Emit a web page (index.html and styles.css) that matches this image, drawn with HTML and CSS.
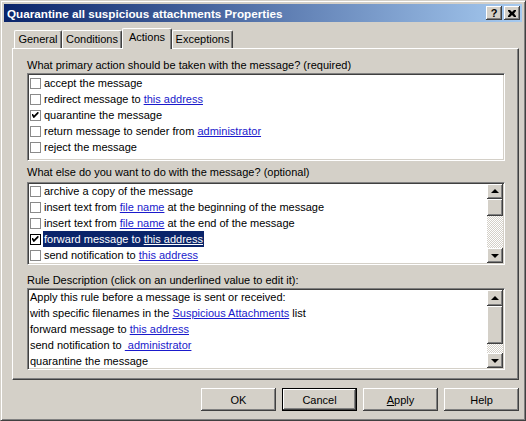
FILE: index.html
```html
<!DOCTYPE html>
<html>
<head>
<meta charset="utf-8">
<link rel="stylesheet" href="styles.css">
</head>
<body>
<div class="window">
  <div class="titlebar">
    <span class="title">Quarantine all suspicious attachments Properties</span>
    <div class="tbtns">
      <span class="tbtn qmark">?</span>
      <span class="tbtn"><svg width="8" height="7" viewBox="0 0 8 7"><path d="M0 0h2l2 2 2-2h2v1l-2 2.5 2 2.5v1h-2l-2-2-2 2h-2v-1l2-2.5-2-2.5z" fill="#000"/></svg></span>
    </div>
  </div>
  <div class="client">
    <div class="tabs">
      <div class="tab t-general">General</div>
      <div class="tab t-cond">Conditions</div>
      <div class="tab sel t-actions">Actions</div>
      <div class="tab t-exc">Exceptions</div>
    </div>
    <div class="panel">
      <div class="label l1">What primary action should be taken with the message? (required)</div>
      <div class="list list1">
        <div class="items">
          <div class="item"><span class="cb"></span><span class="txt">accept the message</span></div>
          <div class="item"><span class="cb"></span><span class="txt">redirect message to <a class="lnk">this address</a></span></div>
          <div class="item"><span class="cb on"><svg width="7" height="7" viewBox="0 0 7 7"><path d="M0 2h1l1 1.5 3.5-3.5h1v1.5l-4.5 4.5h-0.5l-1.5-2.5z" fill="#000"/></svg></span><span class="txt">quarantine the message</span></div>
          <div class="item"><span class="cb"></span><span class="txt">return message to sender from <a class="lnk">administrator</a></span></div>
          <div class="item"><span class="cb"></span><span class="txt">reject the message</span></div>
        </div>
      </div>
      <div class="label l2">What else do you want to do with the message? (optional)</div>
      <div class="list list2">
        <div class="items shifted">
          <div class="item"><span class="cb"></span><span class="txt">archive a copy of the message</span></div>
          <div class="item"><span class="cb"></span><span class="txt">insert text from <a class="lnk">file name</a> at the beginning of the message</span></div>
          <div class="item"><span class="cb"></span><span class="txt">insert text from <a class="lnk">file name</a> at the end of the message</span></div>
          <div class="item"><span class="cb on focus"><svg width="7" height="7" viewBox="0 0 7 7"><path d="M0 2h1l1 1.5 3.5-3.5h1v1.5l-4.5 4.5h-0.5l-1.5-2.5z" fill="#000"/></svg></span><span class="txt sel">forward message to <a class="lnk">this address</a></span></div>
          <div class="item"><span class="cb"></span><span class="txt">send notification to <a class="lnk">this address</a></span></div>
        </div>
        <div class="vscroll vs2">
          <div class="sbtn"><span class="arr up"></span></div>
          <div class="thumb"></div>
          <div class="track"></div>
          <div class="sbtn"><span class="arr down"></span></div>
        </div>
      </div>
      <div class="label l3">Rule Description (click on an underlined value to edit it):</div>
      <div class="list list3">
        <div class="items desc">
          <div class="line">Apply this rule before a message is sent or received:</div>
          <div class="line">with specific filenames in the <a class="lnk">Suspicious Attachments</a> list</div>
          <div class="line">forward message to <a class="lnk">this address</a></div>
          <div class="line">send notification to <a class="lnk">&nbsp;administrator</a></div>
          <div class="line">quarantine the message</div>
        </div>
        <div class="vscroll vs3">
          <div class="sbtn"><span class="arr up"></span></div>
          <div class="thumb"></div>
          <div class="track"></div>
          <div class="sbtn"><span class="arr down"></span></div>
        </div>
      </div>
    </div>
    <div class="buttons">
      <div class="btn">OK</div>
      <div class="btn def">Cancel</div>
      <div class="btn"><span class="ul">A</span>pply</div>
      <div class="btn">Help</div>
    </div>
  </div>
</div>
</body>
</html>
```
FILE: styles.css
```css
html, body {
  margin: 0;
  padding: 0;
  background: #d4d0c8;
}
body {
  font-family: "Liberation Sans", Arial, sans-serif;
  font-size: 11px;
  color: #000;
}
.window {
  width: 526px;
  height: 421px;
  box-sizing: border-box;
  border: 1px solid;
  border-color: #d4d0c8 #404040 #404040 #d4d0c8;
  box-shadow: inset 1px 1px #fff, inset -1px -1px #808080;
  padding: 3px;
  display: flex;
  flex-direction: column;
  background: #d4d0c8;
}
.titlebar {
  flex: none;
  height: 18px;
  background: linear-gradient(to right, #0a246a, #a6caf0);
  display: flex;
  align-items: center;
  justify-content: space-between;
  padding: 0 2px 0 3px;
  color: #fff;
  font-weight: bold;
  font-size: 11.7px;
}
.tbtns {
  display: flex;
  gap: 2px;
}
.tbtn {
  width: 16px;
  height: 14px;
  box-sizing: border-box;
  background: #d4d0c8;
  box-shadow: inset -1px -1px #404040, inset 1px 1px #fff, inset -2px -2px #808080;
  display: flex;
  align-items: center;
  justify-content: center;
  color: #000;
}
.qmark {
  font-family: "Liberation Sans", Arial, sans-serif;
  font-size: 11px;
  font-weight: bold;
  line-height: 14px;
}
.client {
  flex: 1;
  display: flex;
  flex-direction: column;
  padding: 6px 3px 0 8px;
}
.tabs {
  display: flex;
  align-items: flex-end;
  height: 20px;
  padding-left: 2px;
  position: relative;
  z-index: 1;
}
.tab {
  height: 18px;
  box-sizing: border-box;
  border-top: 1px solid #fff;
  border-left: 1px solid #fff;
  border-right: 1px solid #404040;
  box-shadow: inset -1px 0 #808080;
  border-radius: 2px 2px 0 0;
  background: #d4d0c8;
  display: flex;
  align-items: center;
  justify-content: center;
  padding-bottom: 1px;
}
.tab.sel {
  height: 21px;
  margin-bottom: -1px;
  padding-bottom: 4px;
}
.t-general { width: 48px; }
.t-cond { width: 60px; }
.t-actions { width: 50px; }
.t-exc { width: 61px; }
.panel {
  width: 507px;
  height: 332px;
  box-sizing: border-box;
  border: 1px solid;
  border-color: #fff #404040 #404040 #fff;
  box-shadow: inset -1px -1px #808080;
  padding: 9px 13px 0 14px;
}
.label {
  height: 14px;
  line-height: 14px;
  white-space: nowrap;
}
.l1 { margin-bottom: 1px; }
.l2 { margin-top: 4px; margin-bottom: 3px; }
.l3 { margin-top: 8px; margin-bottom: 1px; }
.list {
  box-sizing: border-box;
  border: 1px solid;
  border-color: #808080 #fff #fff #808080;
  box-shadow: inset 1px 1px #404040, inset -1px -1px #d4d0c8;
  background: #fff;
  padding: 1px;
  display: flex;
  overflow: hidden;
}
.list1 { height: 88px; }
.list2 { height: 83px; }
.list3 { height: 82px; }
.items {
  flex: 1;
  display: flex;
  flex-direction: column;
  overflow: hidden;
}
.items.shifted {
  padding-top: 0;
  margin-top: -1px;
}
.item {
  height: 16px;
  flex: none;
  display: flex;
  align-items: center;
  white-space: nowrap;
}
.cb {
  width: 11px;
  height: 11px;
  box-sizing: border-box;
  border: 1px solid #8a8a8a;
  background: #fff;
  margin-left: 1px;
  margin-right: 2px;
  display: flex;
  align-items: center;
  justify-content: center;
  flex: none;
}
.cb.focus {
  border-color: #000;
}
.txt {
  height: 16px;
  line-height: 16px;
  padding: 0 1px;
}
.txt.sel {
  background: #0a246a;
  color: #fff;
}
.lnk {
  color: #1a1acc;
  text-decoration: underline;
}
.txt.sel .lnk {
  color: #fff;
}
.desc {
  padding-left: 1px;
  margin-top: -1px;
}
.line {
  height: 16px;
  line-height: 16px;
  flex: none;
  white-space: nowrap;
}
.vscroll {
  width: 16px;
  flex: none;
  display: flex;
  flex-direction: column;
}
.sbtn, .thumb {
  flex: none;
  box-sizing: border-box;
  background: #d4d0c8;
  box-shadow: inset -1px -1px #404040, inset 1px 1px #fff, inset -2px -2px #808080;
}
.sbtn {
  height: 15px;
  display: flex;
  align-items: center;
  justify-content: center;
}
.vs2 .thumb { height: 17px; }
.vs3 .sbtn:first-child { height: 16px; }
.vs3 .thumb { height: 38px; }
.track {
  flex: 1;
  background: repeating-conic-gradient(#fff 0 25%, #d4d0c8 0 50%) 0 0 / 2px 2px;
}
.arr {
  width: 0;
  height: 0;
  border-left: 4px solid transparent;
  border-right: 4px solid transparent;
}
.arr.up {
  border-bottom: 4px solid #000;
  margin-top: -1px;
}
.arr.down {
  border-top: 4px solid #000;
}
.buttons {
  display: flex;
  justify-content: flex-end;
  gap: 6px;
  margin-top: 8px;
}
.btn {
  width: 75px;
  height: 23px;
  box-sizing: border-box;
  background: #d4d0c8;
  box-shadow: inset -1px -1px #404040, inset 1px 1px #fff, inset -2px -2px #808080;
  display: flex;
  align-items: center;
  justify-content: center;
}
.btn.def {
  border: 1px solid #000;
}
.ul {
  text-decoration: underline;
}
```
